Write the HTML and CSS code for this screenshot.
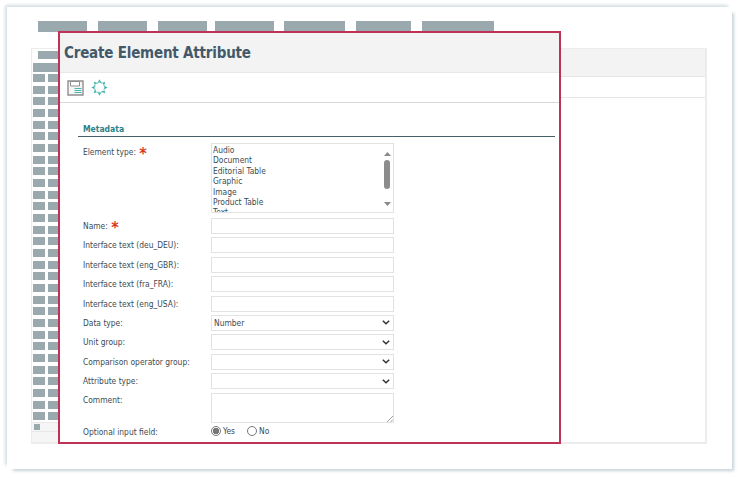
FILE: index.html
```html
<!DOCTYPE html>
<html lang="en">
<head>
<meta charset="utf-8">
<title>Create Element Attribute</title>
<link rel="stylesheet" href="styles.css">
</head>
<body>
<div class="sheet">
  <nav class="tabs">
    <span class="tab t1"></span><span class="tab t2"></span><span class="tab t3"></span><span class="tab t4"></span><span class="tab t5"></span><span class="tab t6"></span><span class="tab t7"></span>
  </nav>
  <div class="panel">
    <div class="side">
      <div class="side-head"><span class="side-tab"></span></div>
      <div class="side-bar"></div>
      <div class="rows">
        <div class="row"><i></i><i></i></div><div class="row"><i></i><i></i></div><div class="row"><i></i><i></i></div><div class="row"><i></i><i></i></div><div class="row"><i></i><i></i></div>
        <div class="row"><i></i><i></i></div><div class="row"><i></i><i></i></div><div class="row"><i></i><i></i></div><div class="row"><i></i><i></i></div><div class="row"><i></i><i></i></div>
        <div class="row"><i></i><i></i></div><div class="row"><i></i><i></i></div><div class="row"><i></i><i></i></div><div class="row"><i></i><i></i></div><div class="row"><i></i><i></i></div>
        <div class="row"><i></i><i></i></div><div class="row"><i></i><i></i></div><div class="row"><i></i><i></i></div><div class="row"><i></i><i></i></div><div class="row"><i></i><i></i></div>
        <div class="row"><i></i><i></i></div><div class="row"><i></i><i></i></div><div class="row"><i></i><i></i></div><div class="row"><i></i><i></i></div><div class="row"><i></i><i></i></div>
        <div class="row"><i></i><i></i></div><div class="row"><i></i><i></i></div><div class="row"><i></i><i></i></div><div class="row"><i></i><i></i></div><div class="row"><i></i><i></i></div>
      </div>
      <div class="side-scroll"><i></i></div>
      <div class="side-foot"></div>
    </div>
    <div class="main">
      <div class="main-head"></div>
      <div class="main-bar"></div>
    </div>
  </div>
</div>

<section class="dialog">
  <h1 class="title">Create Element Attribute</h1>
  <div class="toolbar">
    <svg class="ico" width="17" height="16" viewBox="0 0 17 16" aria-hidden="true">
      <path d="M1 1h15v14h-15z" fill="#f6f6f6" stroke="#8f8f8f" stroke-width="1.400"/>
      <path d="M3.500 1.500h9v4.500h-9z" fill="#fff" stroke="#8f8f8f" stroke-width="1"/>
      <path d="M7.500 8.500h7M7.500 10.500h7M7.500 12.500h7" stroke="#47b5ad" stroke-width="1"/>
    </svg>
    <svg class="ico" width="17" height="17" viewBox="0 0 17 17" aria-hidden="true">
      <circle cx="8.500" cy="8.500" r="5" fill="#fff" stroke="#47b5ad" stroke-width="1" stroke-dasharray="2.200 1.720"/>
      <path d="M8.500 .3L10.300 3.500H6.700zM8.500 16.700L10.300 13.500H6.700zM.3 8.500L3.500 6.700V10.300zM16.700 8.500L13.500 6.700V10.300zM2.700 2.700L6 3.700 3.700 6zM14.300 2.700L11 3.700 13.300 6zM2.700 14.300L6 13.300 3.700 11zM14.300 14.300L11 13.300 13.300 11z" fill="#47b5ad"/>
    </svg>
  </div>
  <div class="body">
    <h2 class="legend">Metadata</h2>
    <form class="form">
      <div class="frow list-row">
        <label class="lab lab-first">Element type: <b class="req">*</b></label>
        <div class="listbox">
          <div class="opts"><div>Audio</div><div>Document</div><div>Editorial Table</div><div>Graphic</div><div>Image</div><div>Product Table</div><div>Text</div></div>
          <div class="sb"><svg width="7" height="4" viewBox="0 0 7 4"><path d="M3.500 0l3.500 4h-7z" fill="#8a8a8a"/></svg><span class="thumb"></span><svg width="7" height="4" viewBox="0 0 7 4"><path d="M0 0h7l-3.500 4z" fill="#8a8a8a"/></svg></div>
        </div>
      </div>
      <div class="frow"><label class="lab">Name: <b class="req">*</b></label><div class="field"></div></div>
      <div class="frow"><label class="lab">Interface text (deu_DEU):</label><div class="field"></div></div>
      <div class="frow"><label class="lab">Interface text (eng_GBR):</label><div class="field"></div></div>
      <div class="frow"><label class="lab">Interface text (fra_FRA):</label><div class="field"></div></div>
      <div class="frow"><label class="lab">Interface text (eng_USA):</label><div class="field"></div></div>
      <div class="frow"><label class="lab">Data type:</label><div class="field sel">Number<svg width="8" height="5" viewBox="0 0 8 5"><path d="M.8.8l3.200 3 3.200-3" fill="none" stroke="#333" stroke-width="1.500"/></svg></div></div>
      <div class="frow"><label class="lab">Unit group:</label><div class="field sel"><svg width="8" height="5" viewBox="0 0 8 5"><path d="M.8.8l3.200 3 3.200-3" fill="none" stroke="#333" stroke-width="1.500"/></svg></div></div>
      <div class="frow"><label class="lab">Comparison operator group:</label><div class="field sel"><svg width="8" height="5" viewBox="0 0 8 5"><path d="M.8.8l3.200 3 3.200-3" fill="none" stroke="#333" stroke-width="1.500"/></svg></div></div>
      <div class="frow"><label class="lab">Attribute type:</label><div class="field sel"><svg width="8" height="5" viewBox="0 0 8 5"><path d="M.8.8l3.200 3 3.200-3" fill="none" stroke="#333" stroke-width="1.500"/></svg></div></div>
      <div class="frow">
        <label class="lab lab-comment">Comment:</label>
        <div class="area"><svg width="7" height="7" viewBox="0 0 7 7"><path d="M7 1L1 7M7 4.500L4.500 7" stroke="#888" stroke-width=".8"/></svg></div>
      </div>
      <div class="frow radio-row">
        <label class="lab">Optional input field:</label>
        <div class="radios"><span class="radio on"></span><span class="rlab">Yes</span><span class="radio"></span><span class="rlab">No</span></div>
      </div>
    </form>
  </div>
</section>
</body>
</html>
```
FILE: styles.css
```css
* { box-sizing: border-box; }
html, body { margin: 0; padding: 0; width: 742px; height: 479px; overflow: hidden; background: #fff; }
body { font-family: "DejaVu Sans Condensed", "DejaVu Sans", sans-serif; position: relative; }
.sheet {
  margin: 0; position: absolute; left: 7px; top: 7px; width: 725px; height: 462px; background: #fff;
  box-shadow: 4px 4px 3px -2px #c6d2d8, -3px -3px 3px -1px #d6dee1;
  padding: 14px 25px 0 24px;
}
.tabs { display: flex; height: 11px; margin-left: 7px; }
.tab { display: block; height: 11px; background: #9aa9ae; }
.t1 { width: 49px; margin-right: 11px; }
.t2 { width: 49px; margin-right: 11px; }
.t3 { width: 49px; margin-right: 8px; }
.t4 { width: 59px; margin-right: 10px; }
.t5 { width: 61px; margin-right: 11px; }
.t6 { width: 55px; margin-right: 11px; }
.t7 { width: 72px; }
.panel { display: flex; margin-top: 16px; width: 676px; height: 396px; border: 1px solid #ececec; border-width: 1px 2px 2px 1px; }
.side { width: 27px; flex: none; display: flex; flex-direction: column; }
.side-head { height: 14px; padding: 2px 0 0 6px; }
.side-tab { display: block; height: 8px; background: #9aa9ae; }
.side-bar { height: 9px; background: #9aa9ae; margin: 0 0 2px 1px; }
.rows { display: flex; flex-direction: column; gap: 3.680px; }
.row { display: flex; gap: 3px; padding-left: 1px; height: 8px; }
.row i { display: block; width: 12px; height: 8px; background: #9aa9ae; flex: none; }
.side-scroll { height: 9px; margin-top: 2px; padding: 1px 0 0 2px; background: #f5f5f5; border-top: 1px solid #e8e8e8; }
.side-scroll i { display: block; width: 6px; height: 6px; background: #9aa9ae; }
.side-foot { flex: 1; background: #f5f5f5; border-top: 1px solid #e8e8e8; }
.main { flex: 1; }
.main-head { height: 28px; background: #f3f3f3; border-bottom: 1px solid #e6e6e6; }
.main-bar { height: 21px; border-bottom: 1px solid #e6e6e6; }

.dialog {
  position: absolute; left: 58px; top: 31px; width: 503px; height: 413px;
  border: 2px solid #bf3157; background: #fff; overflow: hidden;
}
.title {
  margin: 0; height: 40px; background: #f3f3f3; border-bottom: 1px solid #e8e8e8;
  font: bold 15px/41px "DejaVu Sans Condensed", sans-serif; letter-spacing: -.2px; color: #43596a; padding-left: 4px; white-space: nowrap;
}
.toolbar { height: 30px; border-bottom: 1px solid #d8d8d8; display: flex; align-items: center; gap: 7px; padding-left: 7px; }
.ico { display: block; flex: none; }
.body { padding: 19px 4px 0 18px; }
.legend {
  margin: 0; font: bold 8.500px/12px "DejaVu Sans Condensed", sans-serif; color: #2b7f88;
  border-bottom: 1px solid #45606b; padding: 1px 0 0 5px; height: 15px;
}
.form { display: flex; flex-direction: column; gap: 3.400px; padding: 6px 0 0 5px; color: #3a4a52; font: 8.400px/14px "DejaVu Sans Condensed", sans-serif; }
.frow { display: flex; }
.list-row { margin-bottom: 1.600px; }
.lab { display: block; white-space: nowrap; width: 128px; flex: none; padding-top: 1px; }
.lab-first { padding-top: 2px; }
.lab-comment { padding-top: 0; }
.req { color: #d8391c; font-size: 16px; line-height: 10px; font-weight: bold; margin-left: 1px; vertical-align: -4px; }
.listbox { width: 183px; height: 70px; border: 1px solid #e2e2e2; display: flex; overflow: hidden; padding: 1px 1px 0; }
.opts { flex: 1; line-height: 10.400px; height: 67px; overflow: hidden; }
.sb { width: 10px; display: flex; flex-direction: column; align-items: center; padding-top: 7px; }
.sb svg { flex: none; }
.thumb { display: block; width: 6px; height: 29px; border-radius: 3px; background: #8c8c8c; margin: 4px 0 13px; flex: none; }
.field { width: 183px; height: 16px; border: 1px solid #e2e2e2; background: #fff; }
.sel { display: flex; align-items: center; padding: 0 3px 0 2px; line-height: 14px; }
.sel svg { margin-left: auto; }
.area { width: 183px; height: 30px; border: 1px solid #e2e2e2; display: flex; align-items: flex-end; justify-content: flex-end; }
.radio-row { margin-top: -2px; }
.radios { display: flex; align-items: center; height: 14px; }
.radio { display: block; width: 10px; height: 10px; border: 1px solid #777; border-radius: 50%; background: #fff; flex: none; }
.radio.on { background: radial-gradient(circle, #777 0 3px, #fff 3.500px); }
.rlab { margin: 0 12px 0 2px; }
```
